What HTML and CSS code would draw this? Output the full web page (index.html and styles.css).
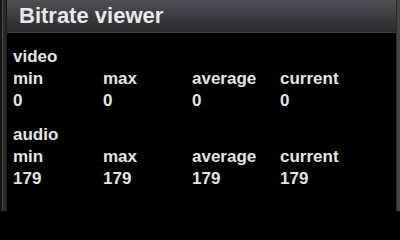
FILE: index.html
```html
<!DOCTYPE html>
<html>
<head>
<meta charset="utf-8">
<link rel="stylesheet" href="styles.css">
</head>
<body>
<div class="frame">
  <div class="edge-left"></div>
  <div class="main">
    <div class="titlebar"><span class="title">Bitrate viewer</span></div>
    <div class="content">
      <div class="group">
        <div class="label">video</div>
        <div class="grid">
          <div>min</div><div>max</div><div>average</div><div>current</div>
          <div>0</div><div>0</div><div>0</div><div>0</div>
        </div>
      </div>
      <div class="group">
        <div class="label">audio</div>
        <div class="grid">
          <div>min</div><div>max</div><div>average</div><div>current</div>
          <div>179</div><div>179</div><div>179</div><div>179</div>
        </div>
      </div>
    </div>
  </div>
  <div class="edge-right"></div>
</div>
</body>
</html>
```

FILE: styles.css
```css
html, body {
  margin: 0;
  padding: 0;
  background: #000;
}
.frame {
  display: flex;
  width: 400px;
  height: 211px;
  overflow: hidden;
  font-family: "Liberation Sans", Arial, sans-serif;
  font-weight: bold;
  color: #e4e4e4;
}
.edge-left {
  width: 7px;
  flex: none;
  background: linear-gradient(to right, #161616 0 2px, #4a4a4a 2px 3px, #2a2a2a 3px 6px, #1a1a1a 6px 7px);
}
.edge-right {
  width: 4px;
  flex: none;
  background: linear-gradient(to right, #2a2a2a 0 1px, #444 1px 4px);
}
.main {
  flex: 1;
  display: flex;
  flex-direction: column;
  background: #000;
}
.titlebar {
  height: 33px;
  box-sizing: border-box;
  border-bottom: 1px solid #3c3c3e;
  background: linear-gradient(to bottom, #4e4e53 0%, #404045 40%, #323236 75%, #2c2c2f 100%);
  padding-left: 12px;
  display: flex;
  align-items: center;
}
.title {
  font-size: 22px;
  line-height: 26px;
  color: #e8e8e8;
  margin-top: -1px;
}
.content {
  padding: 13px 0 0 6px;
  font-size: 17px;
  line-height: 22px;
}
.group + .group {
  margin-top: 12px;
}
.grid {
  display: grid;
  grid-template-columns: 90px 89px 88px 1fr;
}
```
